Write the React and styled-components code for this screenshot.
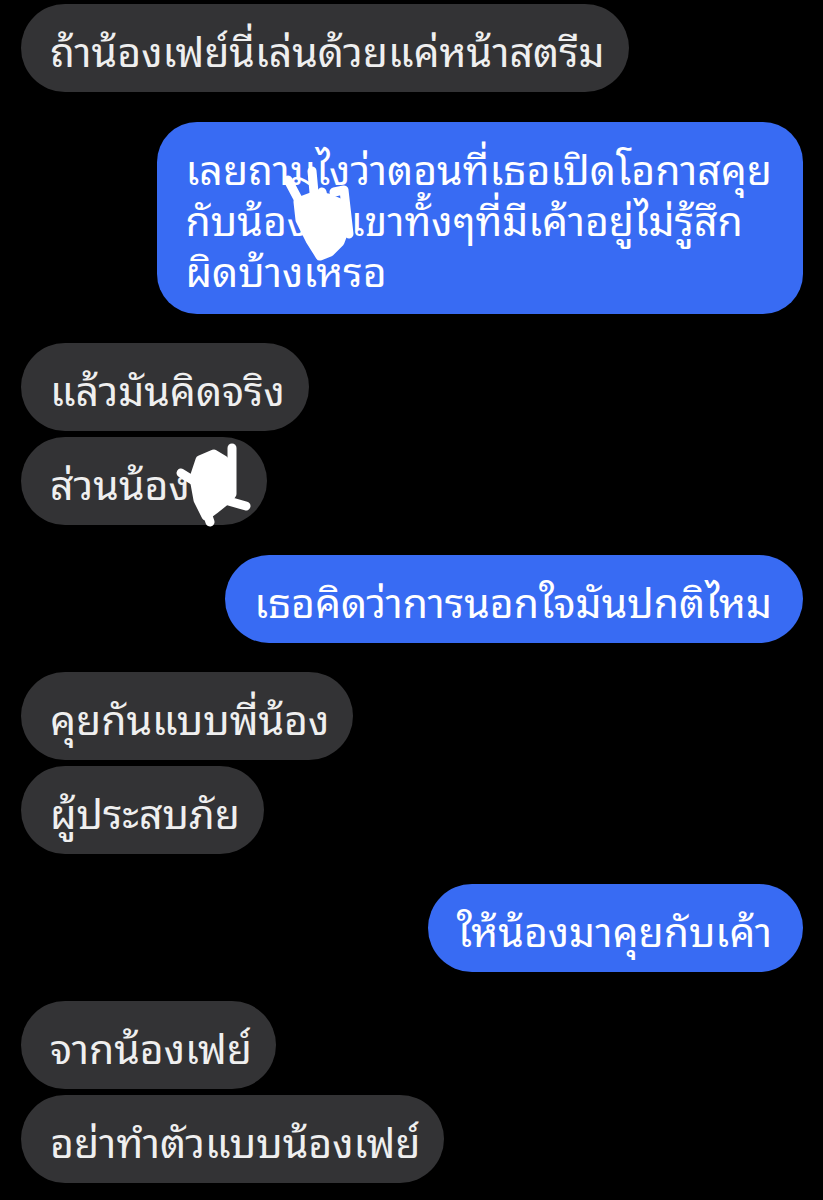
import styled, { createGlobalStyle } from 'styled-components';

const GlobalStyle = createGlobalStyle`
  html, body {
    margin: 0;
    padding: 0;
    background: #000;
  }
  body {
    font-family: "Noto Sans Thai Looped", "Noto Sans Thai", "Loma", "Garuda", "Noto Sans", "DejaVu Sans", sans-serif;
  }
`;

const Thread = styled.div`
  display: flex;
  flex-direction: column;
  padding: 4px 20px 19px 21px;
  background: #000;
  min-height: 1200px;
  box-sizing: border-box;
`;

const Group = styled.div`
  display: flex;
  flex-direction: column;
  align-items: ${(p) => (p.$mine ? 'flex-end' : 'flex-start')};
  gap: 6px;
  & + & {
    margin-top: 29.5px;
  }
`;

const Bubble = styled.div`
  position: relative;
  box-sizing: border-box;
  padding: ${(p) => (p.$mine ? '19px 31px 18px 29px' : '19px 24px 18px 29px')};
  padding-bottom: ${(p) => (p.$multi ? '20px' : '18px')};
  border-radius: ${(p) => (p.$multi ? '40px' : '44px')};
  background: ${(p) => (p.$mine ? '#386bf3' : '#333335')};
  color: ${(p) => (p.$mine ? '#fff' : '#efefef')};
  font-size: 41px;
  line-height: 51px;
  white-space: pre;
`;

const Scribble = styled.svg`
  position: absolute;
  pointer-events: none;
  overflow: visible;
`;

function ScribbleA() {
  return (
    <Scribble
      style={{ left: 129, top: 46 }}
      width="70"
      height="92"
      viewBox="0 0 70 92"
    >
      <g fill="#fff" stroke="#fff" strokeWidth="9" strokeLinecap="round" strokeLinejoin="round">
        <path d="M12 34 L28 28 L42 30 L56 36 L60 58 L54 74 L44 84 L34 88 L24 72 L14 52 Z" />
        <path fill="none" d="M2 12 L20 46" />
        <path fill="none" d="M26 3 L30 46" />
        <path fill="none" d="M48 24 L58 22 L63 66" />
        <path fill="none" d="M36 24 L40 42" />
      </g>
    </Scribble>
  );
}

function ScribbleB() {
  return (
    <Scribble
      style={{ left: 157, top: 9 }}
      width="72"
      height="80"
      viewBox="0 0 72 80"
    >
      <g fill="#fff" stroke="#fff" strokeWidth="9" strokeLinecap="round" strokeLinejoin="round">
        <path d="M22 14 L36 8 L46 14 L50 38 L46 56 L36 64 L28 70 L20 54 L16 32 Z" />
        <path fill="none" d="M54 2 L54 48" />
        <path fill="none" d="M3 27 L24 40" />
        <path fill="none" d="M28 64 L32 76" />
        <path fill="none" d="M40 52 L68 60" />
      </g>
    </Scribble>
  );
}

const groups = [
  { mine: false, items: [{ text: 'ถ้าน้องเฟย์นี่เล่นด้วยแค่หน้าสตรีม' }] },
  {
    mine: true,
    items: [
      {
        text: 'เลยถามไงว่าตอนที่เธอเปิดโอกาสคุย\nกับน้อง    เขาทั้งๆที่มีเค้าอยู่ไม่รู้สึก\nผิดบ้างเหรอ',
        multi: true,
        scribble: 'a',
      },
    ],
  },
  {
    mine: false,
    items: [{ text: 'แล้วมันคิดจริง' }, { text: 'ส่วนน้อง     ', scribble: 'b' }],
  },
  { mine: true, items: [{ text: 'เธอคิดว่าการนอกใจมันปกติไหม' }] },
  { mine: false, items: [{ text: 'คุยกันแบบพี่น้อง' }, { text: 'ผู้ประสบภัย' }] },
  { mine: true, items: [{ text: 'ให้น้องมาคุยกับเค้า' }] },
  { mine: false, items: [{ text: 'จากน้องเฟย์' }, { text: 'อย่าทำตัวแบบน้องเฟย์' }] },
];

export default function App() {
  return (
    <>
      <GlobalStyle />
      <Thread>
        {groups.map((g, i) => (
          <Group key={i} $mine={g.mine}>
            {g.items.map((m, j) => (
              <Bubble key={j} $mine={g.mine} $multi={m.multi}>
                {m.text}
                {m.scribble === 'a' && <ScribbleA />}
                {m.scribble === 'b' && <ScribbleB />}
              </Bubble>
            ))}
          </Group>
        ))}
      </Thread>
    </>
  );
}
